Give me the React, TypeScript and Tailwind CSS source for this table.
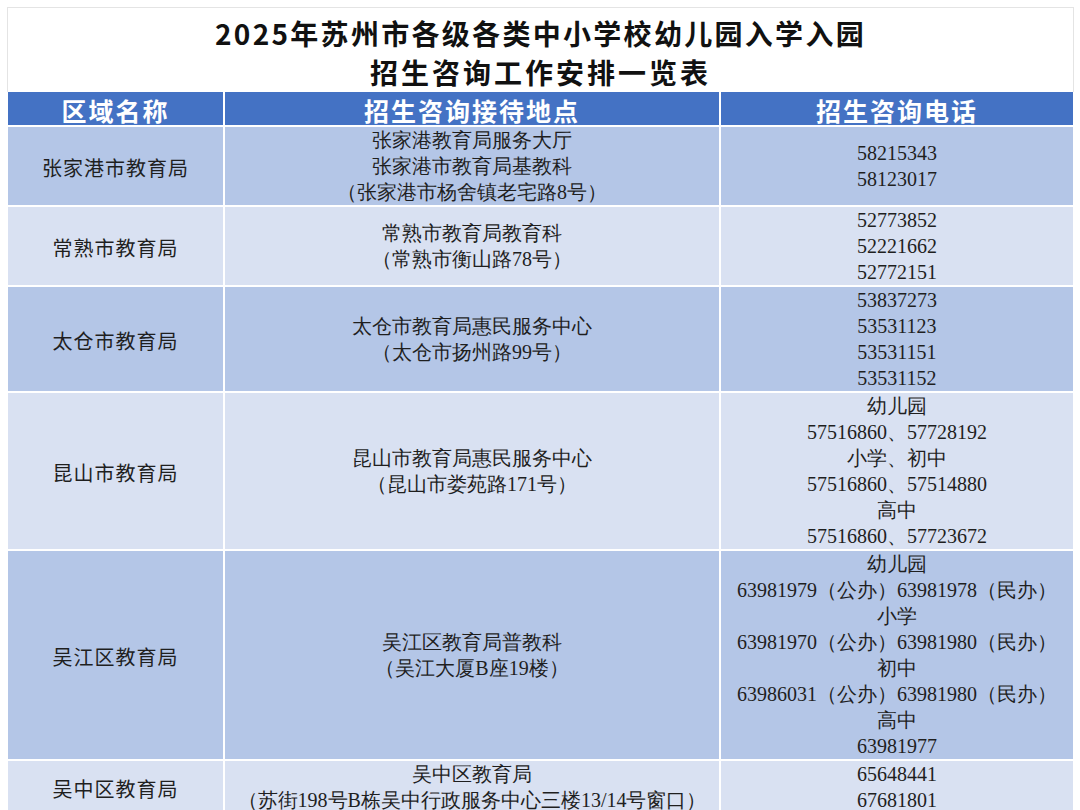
import React from "react"

type Row = {
    area: string
    place: string[]
    phones: string[]
}

const rows: Row[] = [
    {
        area: "张家港市教育局",
        place: ["张家港教育局服务大厅", "张家港市教育局基教科", "（张家港市杨舍镇老宅路8号）"],
        phones: ["58215343", "58123017"],
    },
    {
        area: "常熟市教育局",
        place: ["常熟市教育局教育科", "（常熟市衡山路78号）"],
        phones: ["52773852", "52221662", "52772151"],
    },
    {
        area: "太仓市教育局",
        place: ["太仓市教育局惠民服务中心", "（太仓市扬州路99号）"],
        phones: ["53837273", "53531123", "53531151", "53531152"],
    },
    {
        area: "昆山市教育局",
        place: ["昆山市教育局惠民服务中心", "（昆山市娄苑路171号）"],
        phones: ["幼儿园", "57516860、57728192", "小学、初中", "57516860、57514880", "高中", "57516860、57723672"],
    },
    {
        area: "吴江区教育局",
        place: ["吴江区教育局普教科", "（吴江大厦B座19楼）"],
        phones: [
            "幼儿园",
            "63981979（公办）63981978（民办）",
            "小学",
            "63981970（公办）63981980（民办）",
            "初中",
            "63986031（公办）63981980（民办）",
            "高中",
            "63981977",
        ],
    },
    {
        area: "吴中区教育局",
        place: ["吴中区教育局", "（苏街198号B栋吴中行政服务中心三楼13/14号窗口）"],
        phones: ["65648441", "67681801"],
    },
]

function Lines({ items }: { items: string[] }) {
    return (
        <>
            {items.map((line, i) => (
                <div
                    key={i}
                    className="whitespace-nowrap font-['Liberation_Serif','Times_New_Roman',Tinos,'DejaVu_Serif',serif]"
                >
                    {line}
                </div>
            ))}
        </>
    )
}

export default function App() {
    return (
        <div className="w-[1080px] h-[810px] overflow-hidden bg-white pl-[7px] pt-[7px]">
            <div className="w-[1067px]">
                {/* Title */}
                <div className="border border-b-0 border-[#e4e4e4] pt-[6px] text-center font-['Noto_Sans_CJK_SC',sans-serif] text-[28px] font-bold leading-[39px] text-[#111]">
                    <div className="tracking-[2.3px]">2025年苏州市各级各类中小学校幼儿园入学入园</div>
                    <div className="tracking-[3px]">招生咨询工作安排一览表</div>
                </div>

                {/* Table */}
                <div className="ml-px grid w-[1065px] grid-cols-[215px_494px_352px] gap-[2px] bg-white">
                    {["区域名称", "招生咨询接待地点", "招生咨询电话"].map((h) => (
                        <div
                            key={h}
                            className="h-[33px] bg-[#4472c4] text-center font-['Noto_Sans_CJK_SC',sans-serif] text-[25px] font-bold leading-[36px] tracking-[2px] text-white"
                        >
                            {h}
                        </div>
                    ))}
                    {rows.map((row, i) => {
                        const bg = i % 2 === 0 ? "bg-[#b4c6e7]" : "bg-[#d9e1f2]"
                        return (
                            <React.Fragment key={row.area}>
                                <div
                                    className={`${bg} flex flex-col items-center justify-center pt-[4px] text-center font-['Noto_Sans_CJK_SC',serif] text-[20px] leading-[26px] tracking-[1px] text-[#1f1f1f]`}
                                >
                                    {row.area}
                                </div>
                                <div
                                    className={`${bg} flex flex-col items-center justify-center text-center text-[20px] leading-[26px] text-[#1f1f1f]`}
                                >
                                    <Lines items={row.place} />
                                </div>
                                <div
                                    className={`${bg} flex flex-col items-center justify-center text-center text-[20px] leading-[26px] text-[#1f1f1f]`}
                                >
                                    <Lines items={row.phones} />
                                </div>
                            </React.Fragment>
                        )
                    })}
                </div>
            </div>
        </div>
    )
}
